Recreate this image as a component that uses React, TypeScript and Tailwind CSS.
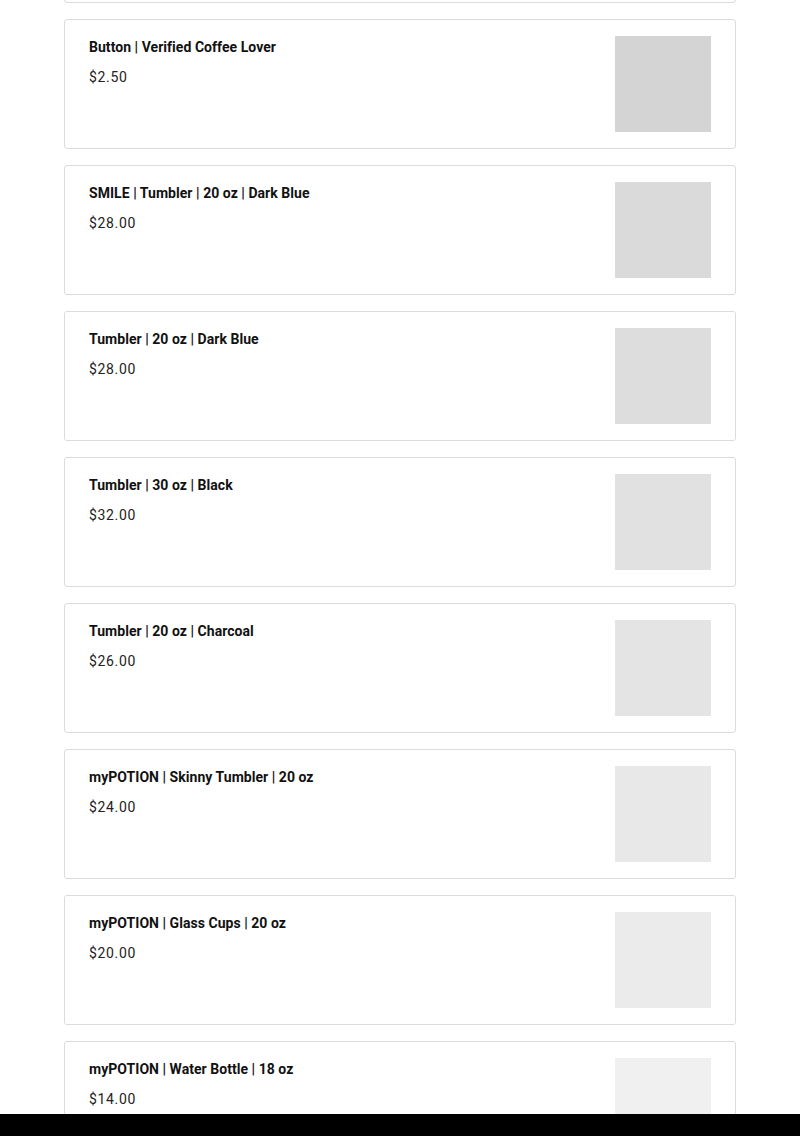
import React from "react";

const items = [
  { title: "", price: "", bg: "bg-[#d0d0d0]" },
  { title: "Button | Verified Coffee Lover", price: "$2.50", bg: "bg-[#d4d4d4]" },
  { title: "SMILE | Tumbler | 20 oz | Dark Blue", price: "$28.00", bg: "bg-[#dadada]" },
  { title: "Tumbler | 20 oz | Dark Blue", price: "$28.00", bg: "bg-[#dddddd]" },
  { title: "Tumbler | 30 oz | Black", price: "$32.00", bg: "bg-[#e1e1e1]" },
  { title: "Tumbler | 20 oz | Charcoal", price: "$26.00", bg: "bg-[#e4e4e4]" },
  { title: "myPOTION | Skinny Tumbler | 20 oz", price: "$24.00", bg: "bg-[#e8e8e8]" },
  { title: "myPOTION | Glass Cups | 20 oz", price: "$20.00", bg: "bg-[#ebebeb]" },
  { title: "myPOTION | Water Bottle | 18 oz", price: "$14.00", bg: "bg-[#f0f0f0]" },
];

export default function App() {
  return (
    <div
      className="min-h-[1136px] bg-white overflow-hidden"
      style={{ fontFamily: "Roboto, 'Liberation Sans', sans-serif" }}
    >
      <div className="mt-[-127px] px-16 flex flex-col gap-4">
        {items.map((it, i) => (
          <div
            key={i}
            className="flex justify-between border border-[#dcdcdc] rounded-[3px] bg-white pl-6 pr-6 py-4 h-[130px]"
          >
            <div className="flex flex-col pt-px">
              {it.title && (
                <div className="text-[14px] leading-5 font-bold text-[#111] tracking-[0.04px]">{it.title}</div>
              )}
              {it.price && (
                <div className="mt-[10px] text-[14px] leading-5 text-[#222] tracking-[0.65px]">{it.price}</div>
              )}
            </div>
            <div className={`w-24 h-24 shrink-0 ${it.bg}`} />
          </div>
        ))}
      </div>
      <div className="fixed bottom-0 left-0 right-0 h-[22px] bg-black" />
    </div>
  );
}
